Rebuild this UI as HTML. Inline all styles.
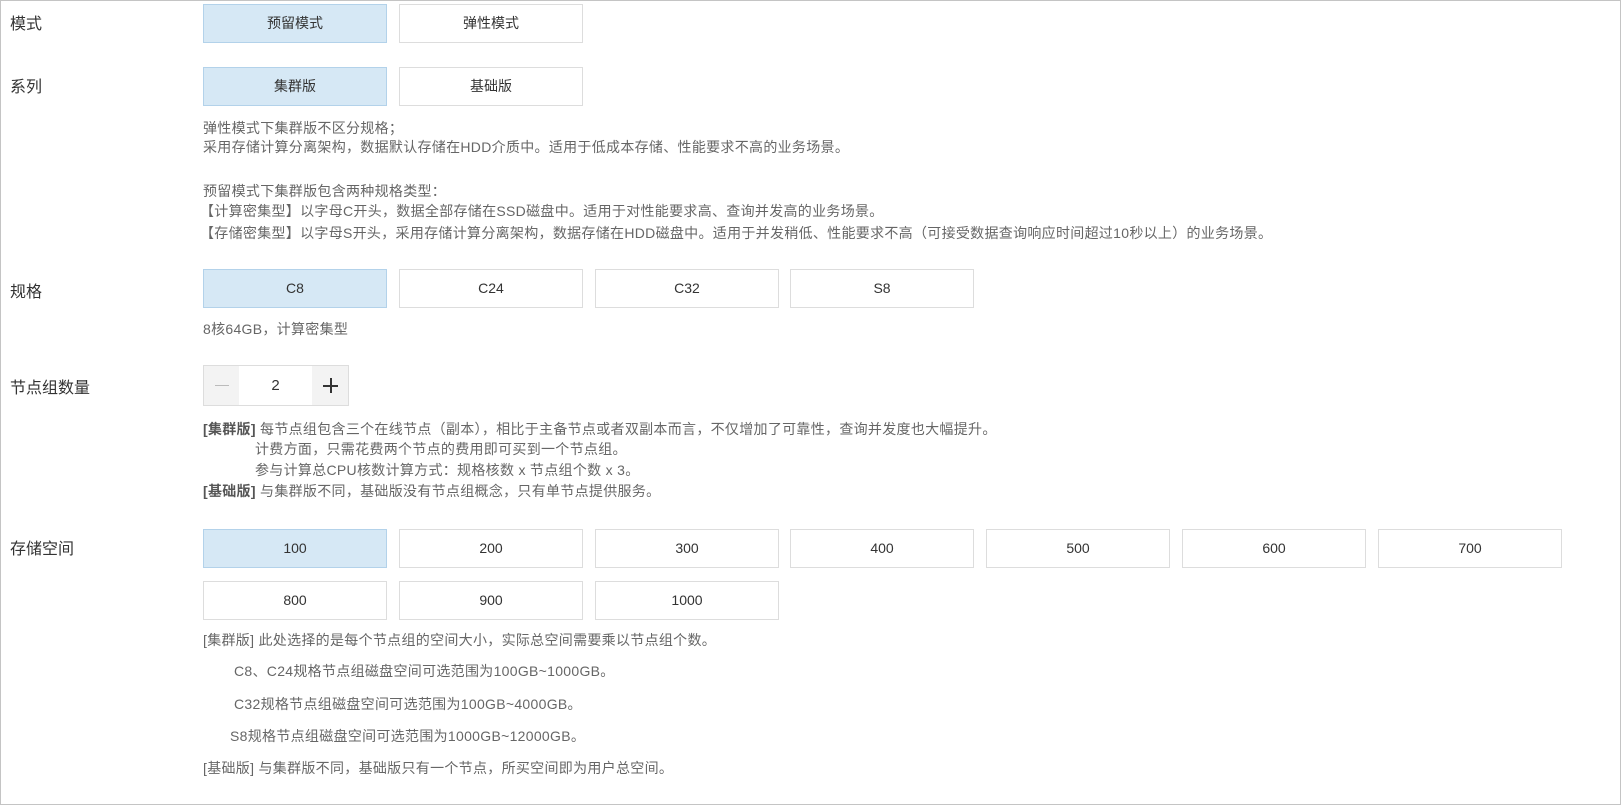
<!DOCTYPE html>
<html><head><meta charset="utf-8"><style>
*{margin:0;padding:0;box-sizing:border-box}
body{width:1621px;height:805px;position:relative;background:#fff;font-family:"Liberation Sans","Noto Sans CJK SC",sans-serif;overflow:hidden}
.frame{position:absolute;left:0;top:0;width:1621px;height:805px;border:1px solid #c4c4c4}
.lb{position:absolute;left:10px;font-size:16px;color:#333;line-height:20px}
.b{position:absolute;width:184px;height:39px;border:1px solid #ddd;background:#fff;color:#333;font-size:14px;line-height:37px;text-align:center}
.b.s{background:#d6e8f5;border-color:#b3d2ea}
.t{position:absolute;font-size:14px;letter-spacing:0.3px;color:#666;line-height:20px;white-space:nowrap}
.t b{color:#555}
</style></head><body>
<div class="frame"></div>
<div class="lb" style="top:15px">模式</div>
<div class="lb" style="top:78px">系列</div>
<div class="lb" style="top:283px">规格</div>
<div class="lb" style="top:379px">节点组数量</div>
<div class="lb" style="top:540px">存储空间</div>

<div class="b s" style="left:203px;top:4px">预留模式</div>
<div class="b" style="left:399px;top:4px">弹性模式</div>
<div class="b s" style="left:203px;top:67px">集群版</div>
<div class="b" style="left:399px;top:67px">基础版</div>

<div class="t" style="left:203px;top:118px">弹性模式下集群版不区分规格；</div>
<div class="t" style="left:203px;top:137px">采用存储计算分离架构，数据默认存储在HDD介质中。适用于低成本存储、性能要求不高的业务场景。</div>
<div class="t" style="left:203px;top:181px">预留模式下集群版包含两种规格类型：</div>
<div class="t" style="left:200px;top:201px">【计算密集型】以字母C开头，数据全部存储在SSD磁盘中。适用于对性能要求高、查询并发高的业务场景。</div>
<div class="t" style="left:200px;top:223px">【存储密集型】以字母S开头，采用存储计算分离架构，数据存储在HDD磁盘中。适用于并发稍低、性能要求不高（可接受数据查询响应时间超过10秒以上）的业务场景。</div>

<div class="b s" style="left:203px;top:269px">C8</div>
<div class="b" style="left:399px;top:269px">C24</div>
<div class="b" style="left:595px;top:269px">C32</div>
<div class="b" style="left:790px;top:269px">S8</div>
<div class="t" style="left:203px;top:319px">8核64GB，计算密集型</div>

<div style="position:absolute;left:203px;top:365px;width:146px;height:41px;border:1px solid #ddd;background:#fff">
 <div style="position:absolute;left:0;top:0;width:35px;height:39px;background:#f3f3f3"></div>
 <div style="position:absolute;left:11px;top:19px;width:14px;height:1px;background:#bbb"></div>
 <div style="position:absolute;left:35px;top:0;width:73px;height:39px;text-align:center;line-height:39px;font-size:15px;color:#333">2</div>
 <div style="position:absolute;right:0;top:0;width:36px;height:39px;background:#f3f3f3"></div>
 <div style="position:absolute;left:119px;top:19px;width:15px;height:1.5px;background:#333"></div>
 <div style="position:absolute;left:126px;top:12px;width:1.5px;height:15px;background:#333"></div>
</div>

<div class="t" style="left:203px;top:419px"><b>[集群版]</b> 每节点组包含三个在线节点（副本），相比于主备节点或者双副本而言，不仅增加了可靠性，查询并发度也大幅提升。</div>
<div class="t" style="left:255px;top:439px">计费方面，只需花费两个节点的费用即可买到一个节点组。</div>
<div class="t" style="left:255px;top:460px">参与计算总CPU核数计算方式：规格核数 x 节点组个数 x 3。</div>
<div class="t" style="left:203px;top:481px"><b>[基础版]</b> 与集群版不同，基础版没有节点组概念，只有单节点提供服务。</div>

<div class="b s" style="left:203px;top:529px">100</div>
<div class="b" style="left:399px;top:529px">200</div>
<div class="b" style="left:595px;top:529px">300</div>
<div class="b" style="left:790px;top:529px">400</div>
<div class="b" style="left:986px;top:529px">500</div>
<div class="b" style="left:1182px;top:529px">600</div>
<div class="b" style="left:1378px;top:529px">700</div>
<div class="b" style="left:203px;top:581px">800</div>
<div class="b" style="left:399px;top:581px">900</div>
<div class="b" style="left:595px;top:581px">1000</div>

<div class="t" style="left:203px;top:630px">[集群版] 此处选择的是每个节点组的空间大小，实际总空间需要乘以节点组个数。</div>
<div class="t" style="left:234px;top:661px">C8、C24规格节点组磁盘空间可选范围为100GB~1000GB。</div>
<div class="t" style="left:234px;top:694px">C32规格节点组磁盘空间可选范围为100GB~4000GB。</div>
<div class="t" style="left:230px;top:726px">S8规格节点组磁盘空间可选范围为1000GB~12000GB。</div>
<div class="t" style="left:203px;top:758px">[基础版] 与集群版不同，基础版只有一个节点，所买空间即为用户总空间。</div>
</body></html>
